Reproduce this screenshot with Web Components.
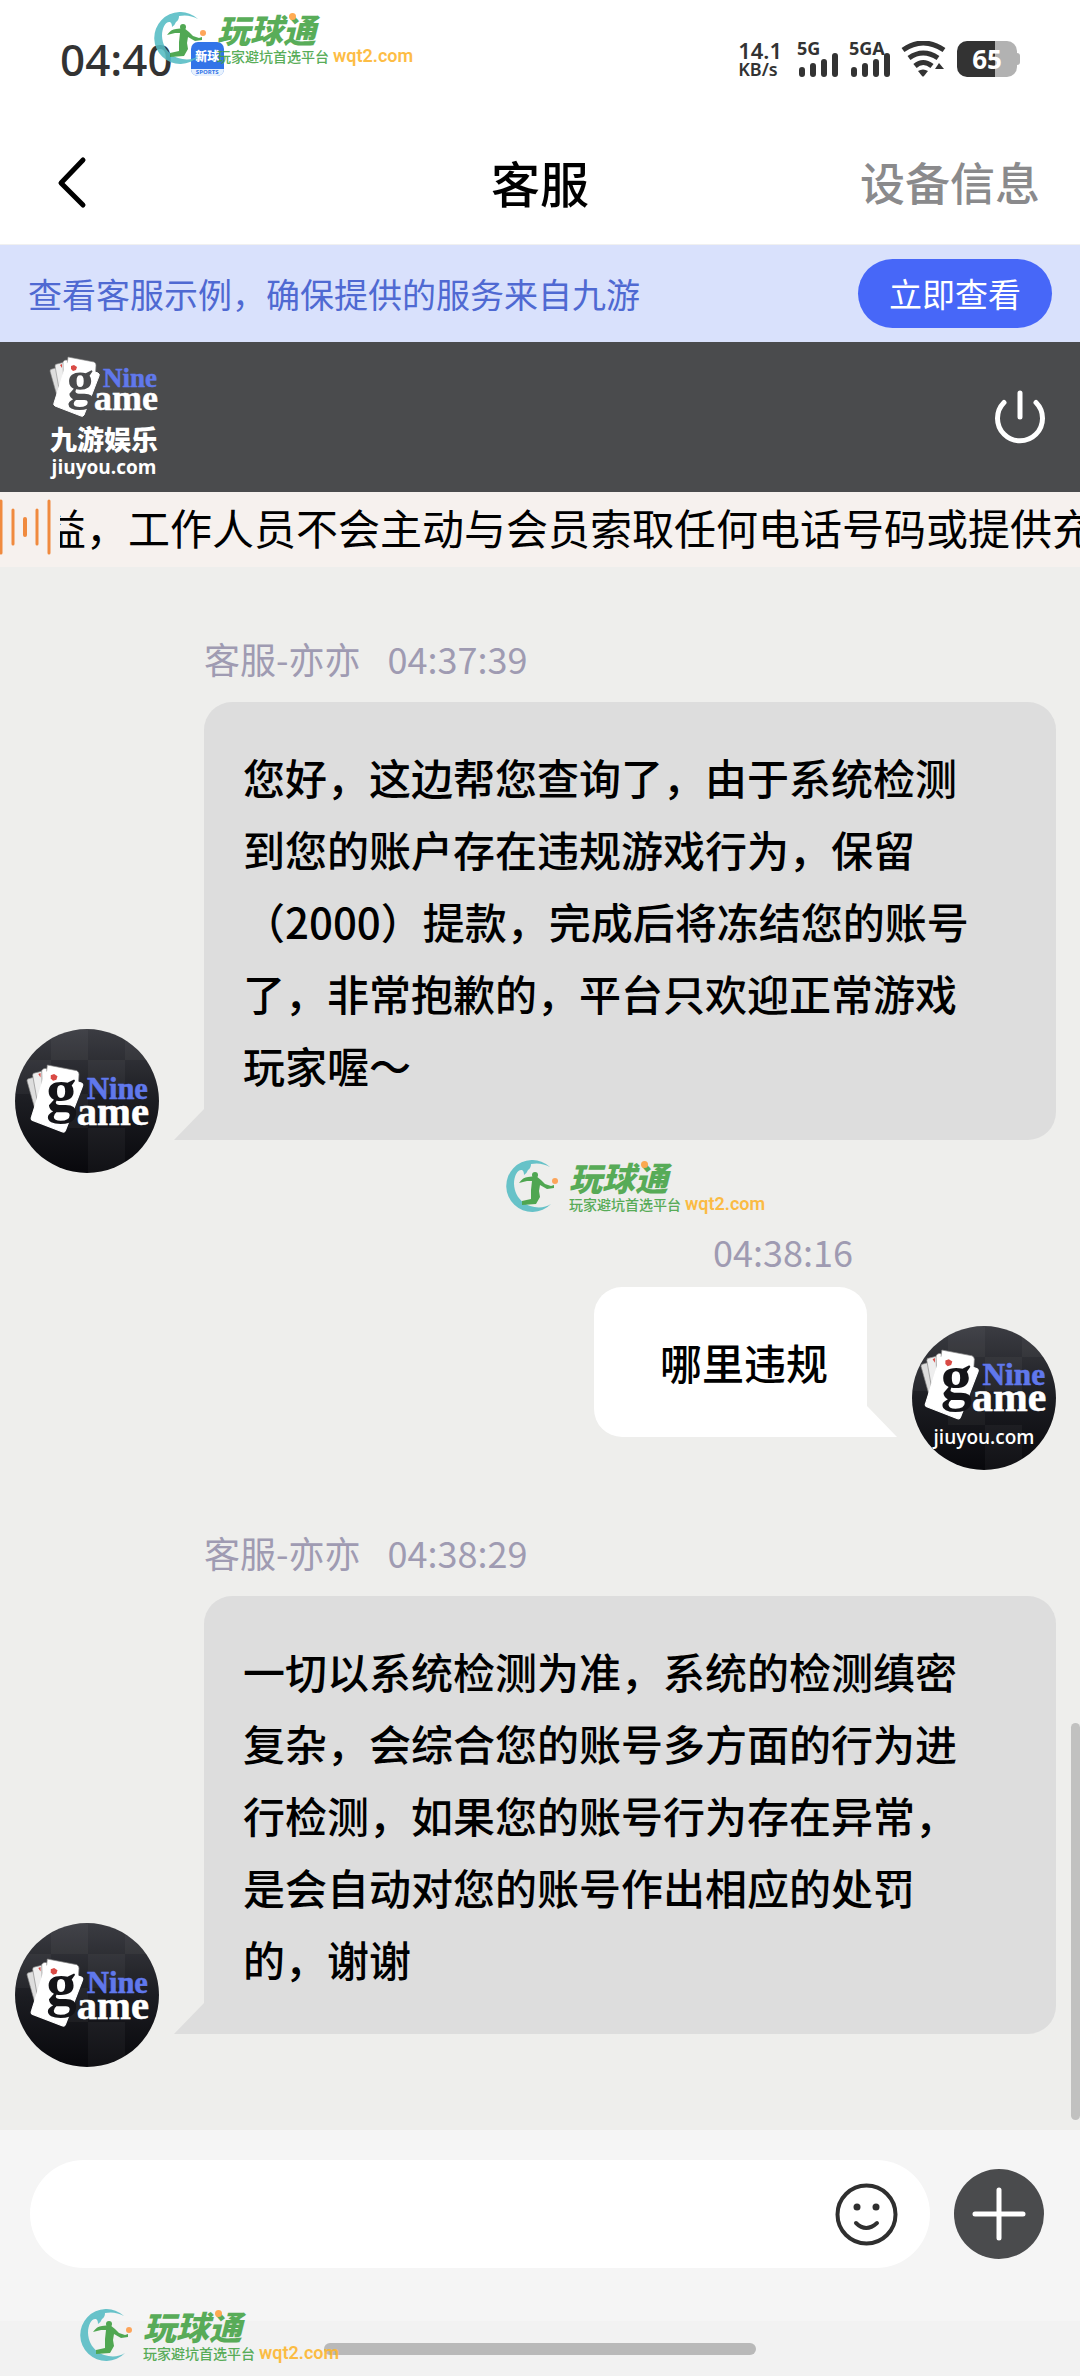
<!DOCTYPE html>
<html lang="zh-CN">
<head>
<meta charset="utf-8">
<meta name="viewport" content="width=device-width, initial-scale=1">
<title>客服</title>
<style>
    body {
        margin: 0;
        background: #eeeeec;
        color: #000;
        font-family: "Noto Sans CJK SC", sans-serif;
    }
</style>
</head>
<body>
<chat-app></chat-app>

<script>
class BaseComponent extends HTMLElement {
    constructor() {
        super();
        this._root = this.attachShadow({ mode: 'open' });
        this._root.innerHTML = `
        <style>
        * { box-sizing: border-box; }
        :host { display: block; box-sizing: border-box; }
        button {
            margin: 0;
            padding: 0;
            border: 0;
            background: none;
            color: inherit;
            font: inherit;
            cursor: pointer;
        }
        svg { display: block; }
        </style>
        ${this._template()}`;
    }
    _template() {
        return '';
    }
}

// cards + "Nine game", drawn in a 107 x 60 box; ink is the colour behind it
const nineGame = ink => `
    <g stroke="#888" stroke-width=".6">
        <path d="M0 14q0-2 2-2l7-2 4 34-4 2z" fill="#ddd"/>
        <path d="M5 9q0-2 2-2l8-2 5 24-9 14z" fill="#eee"/>
        <path d="M13 5q1-2 3-2l8 2-10 33z" fill="#fff"/>
        <path d="M18 0l26 5q2 1 2 3l-1 16-29-7z" fill="#fff"/>
    </g>
    <path d="M18 6l30 10q2 1 1 3L34 58q-1 2-3 1L5 49q-2-1-1-3L16 8q0-2 2-2z" fill="#fff" stroke="#fff"/>
    <path d="M21 9l3-1 3 2-1 3-3 1-2-2z" fill="#d94a45"/>
    <path d="M10 8l2-1v4z" fill="#d94a45"/>
    <text x="17" y="41" font-size="54" fill="${ink}">g</text>
    <text x="53" y="30" font-size="27" fill="#6078ec" stroke="#6078ec" stroke-width=".5">Nine</text>
    <text x="44" y="53" font-size="36" fill="#fff" stroke="#fff" stroke-width=".5">ame</text>`;

class BrandLogo extends BaseComponent {
    _template() {
        return `
        <style>
        :host { color: #fff; text-align: center; width: 108px; }
        svg { font: bold 27px "Liberation Serif", serif; overflow: visible; }
        .name { font-size: 27px; font-weight: 900; line-height: 36px; margin-top: 4px; }
        .site { font: 700 19px/20px "Open Sans", sans-serif; }
        </style>
        <svg width="107" height="60" viewBox="0 0 107 60">${nineGame('#4a4b4d')}</svg>
        <div class="name">九游娱乐</div>
        <div class="site">jiuyou.com</div>`;
    }
}
customElements.define('brand-logo', BrandLogo);

class UserAvatar extends BaseComponent {
    _template() {
        const site = this.hasAttribute('site');
        return `
        <style>
        :host { width: 144px; height: 144px; flex: none; }
        svg { border-radius: 50%; font-family: "Liberation Serif", serif; font-weight: bold; }
        .site { font: 600 19px "Open Sans", sans-serif; }
        </style>
        <svg width="144" height="144" viewBox="0 0 144 144">
            <defs>
                <linearGradient id="bg" x1="0" y1="0" x2="0" y2="1">
                    <stop offset="0" stop-color="#3b3c42"/>
                    <stop offset=".5" stop-color="#1c1d22"/>
                    <stop offset="1" stop-color="#08080c"/>
                </linearGradient>
            </defs>
            <rect width="144" height="144" fill="url(#bg)"/>
            <path d="M36 0h37v31H36zM73 31h37v34H73zM110 0h34v31h-34zM0 31h36v34H0zM36 65h37v34H36zM73 99h37v45H73z" fill="#fff" opacity=".04"/>
            <g transform="${site ? 'translate(9 24) scale(1.16)' : 'translate(12 36) scale(1.13)'}">${nineGame('#141418')}</g>
            ${site ? '<text class="site" x="72" y="118" fill="#fff" text-anchor="middle">jiuyou.com</text>' : ''}
        </svg>`;
    }
}
customElements.define('user-avatar', UserAvatar);

class SiteStamp extends BaseComponent {
    _template() {
        return `
        <style>
        :host {
            display: flex;
            gap: 10px;
            position: absolute;
            z-index: 2;
            white-space: nowrap;
            pointer-events: none;
            opacity: .88;
        }
        .title {
            position: relative;
            width: 104px;
            font-size: 33px;
            font-weight: 900;
            font-style: italic;
            line-height: 34px;
            color: #43a243;
        }
        .title::after {
            content: "";
            position: absolute;
            left: 72px;
            top: 1px;
            width: 7px;
            height: 7px;
            border-radius: 50%;
            background: #ffa03c;
        }
        .line { display: flex; gap: 4px; align-items: center; height: 20px; }
        .tag { font-size: 14px; line-height: 20px; color: #43a243; font-weight: 500; }
        .url { font: 600 18px/20px Roboto, sans-serif; color: #fdb52c; }
        </style>
        <svg width="56" height="53" viewBox="0 0 56 53">
            <path d="M47 7A26 26 0 1 0 48 44C36 52 12 46 11 24C11 15 15 9 19 10Q21 11 21 15Q24 13 25 10Q28 8 28 4Q38 2 47 7Z" fill="#55bcc4"/>
            <circle cx="32" cy="15" r="3" fill="#3a9d3c"/>
            <path d="M16 23q4-6 9-6l8-1 5 4 4 4 6 2 3-1v3l-7 1-7-4-1 6 1 6-4 7-14 1v-4l9-2v-9l1-9-5 0z" fill="#3a9d3c"/>
            <circle cx="52" cy="21" r="3" fill="#ff9a45"/>
        </svg>
        <div>
            <div class="title">玩球通</div>
            <div class="line"><span class="tag">玩家避坑首选平台</span><span class="url">wqt2.com</span></div>
        </div>`;
    }
}
customElements.define('site-stamp', SiteStamp);

class StatusBar extends BaseComponent {
    _template() {
        const bars = `<path d="M3 17v4M14 13v8M25 9v12M36 3v18" stroke="#333" stroke-width="6" stroke-linecap="round"/>`;
        return `
        <style>
        :host {
            display: flex;
            align-items: center;
            position: relative;
            height: 122px;
            padding: 0 60px 4px;
            background: #fff;
            color: #333;
        }
        site-stamp { left: 151px; top: 12px; }
        .time { font: 500 44px/50px "Noto Sans", sans-serif; }
        .app {
            width: 33px;
            height: 34px;
            margin-left: 18px;
            border-radius: 7px;
            overflow: hidden;
            background: #3274e8;
            color: #fff;
            text-align: center;
            font-size: 12px;
            font-weight: 900;
            line-height: 27px;
        }
        .app small {
            display: block;
            background: #e8f2fd;
            color: #3274e8;
            font: 700 6px/7px "Open Sans", sans-serif;
        }
        .icons { display: flex; align-items: center; margin-left: auto; font-family: "Noto Sans", sans-serif; }
        .speed { font-size: 18px; font-weight: 600; line-height: 18px; margin-right: 15px; }
        .speed b { display: block; font-size: 22px; font-weight: 600; line-height: 20px; }
        .net { font-size: 18px; font-weight: 700; line-height: 14px; width: 42px; margin-right: 10px; }
        .net svg { margin: -2px 0 0 2px; }
        .wifi { margin-right: 10px; }
        .battery {
            width: 60px;
            height: 36px;
            border-radius: 10px;
            background: linear-gradient(90deg, #333 63%, #b2b2b2 63%);
            color: #fff;
            font: 700 26px/36px "Noto Sans", sans-serif;
            text-align: center;
        }
        .tip { width: 3px; height: 12px; border-radius: 0 3px 3px 0; background: #b2b2b2; }
        </style>
        <span class="time">04:40</span>
        <div class="app">新球<small>SPORTS</small></div>
        <div class="icons">
            <div class="speed"><b>14.1</b>KB/s</div>
            <div class="net">5G<svg width="40" height="24" viewBox="0 0 40 24">${bars}</svg></div>
            <div class="net">5GA<svg width="40" height="24" viewBox="0 0 40 24">${bars}</svg></div>
            <svg class="wifi" width="46" height="36" viewBox="0 0 46 36" fill="none" stroke="#333" stroke-width="5">
                <path d="M2 9Q22-5 43 9M8 17Q22 7 37 17M14 25Q22 18 31 25"/>
                <path d="M17 30q5-3 10 0l-4 5q-1 1-2 0z" fill="#333" stroke="none"/>
                <path d="M34 28l4-6 5 6z" fill="#333" stroke="none"/>
            </svg>
            <div class="battery">65</div><div class="tip"></div>
        </div>
        <site-stamp></site-stamp>`;
    }
}
customElements.define('status-bar', StatusBar);

class NavBar extends BaseComponent {
    _template() {
        return `
        <style>
        :host {
            display: grid;
            grid-template-columns: 1fr auto 1fr;
            align-items: center;
            height: 123px;
            padding: 0 40px 2px;
            background: #fff;
            border-bottom: 1px solid #f0f0f0;
        }
        .back { justify-self: start; }
        h1 { margin: 0; font-size: 49px; font-weight: 500; line-height: 60px; }
        .info { justify-self: end; font-size: 45px; font-weight: 500; line-height: 60px; color: #8a8a8c; }
        </style>
        <button class="back" aria-label="返回">
            <svg width="60" height="60" viewBox="0 0 60 60"><path d="M43 8L21 31l22 22" fill="none" stroke="#000" stroke-width="5" stroke-linecap="round" stroke-linejoin="round"/></svg>
        </button>
        <h1><slot></slot></h1>
        <button class="info">设备信息</button>`;
    }
}
customElements.define('nav-bar', NavBar);

class TipBanner extends BaseComponent {
    _template() {
        return `
        <style>
        :host {
            display: flex;
            align-items: center;
            justify-content: space-between;
            height: 97px;
            padding: 0 28px;
            background: #d9e1fc;
            color: #4f69d2;
            font-size: 34px;
            line-height: 48px;
        }
        button {
            width: 194px;
            height: 69px;
            padding-bottom: 2px;
            border-radius: 35px;
            background: #4767f8;
            color: #fff;
            font-size: 33px;
        }
        </style>
        <slot></slot>
        <button>立即查看</button>`;
    }
}
customElements.define('tip-banner', TipBanner);

class BrandBar extends BaseComponent {
    _template() {
        return `
        <style>
        :host {
            display: flex;
            align-items: center;
            justify-content: space-between;
            height: 150px;
            padding: 0 32px 0 50px;
            background: #4a4b4d;
        }
        </style>
        <brand-logo></brand-logo>
        <button aria-label="结束会话">
            <svg width="56" height="56" viewBox="0 0 56 56" fill="none" stroke="#fff" stroke-width="5" stroke-linecap="round"><path d="M28 4v24M12 13.5a22.500 22.500 0 1 0 32 0"/></svg>
        </button>`;
    }
}
customElements.define('brand-bar', BrandBar);

class NoticeBar extends BaseComponent {
    _template() {
        return `
        <style>
        :host { display: flex; align-items: center; height: 75px; padding-bottom: 6px; background: #f6f1ee; overflow: hidden; }
        svg { flex: none; }
        .track { flex: 1; min-width: 0; margin-left: 8px; overflow: hidden; white-space: nowrap; font-size: 42px; line-height: 60px; }
        /* scrolled part of the marquee */
        .text { margin-left: -16px; }
        </style>
        <svg width="52" height="56" viewBox="0 0 52 56" stroke="#f08a3e" stroke-width="3" stroke-linecap="round">
            <path d="M1 2v52M13 11v34M37 11v34M49 2v52"/><path d="M25 20v16" stroke-width="4"/>
        </svg>
        <div class="track"><div class="text"><slot></slot></div></div>`;
    }
}
customElements.define('notice-bar', NoticeBar);

class ChatMessage extends BaseComponent {
    _template() {
        const mine = this.hasAttribute('mine');
        return `
        <style>
        :host { display: flex; gap: 45px; align-items: flex-end; padding: 0 24px 0 15px; }
        :host([mine]) { flex-direction: row-reverse; }
        .body { flex: 1; margin-bottom: 33px; }
        .meta {
            display: flex;
            gap: 27px;
            margin-bottom: 16px;
            font-size: 36px;
            line-height: 56px;
            color: #9f9bb2;
        }
        .bubble {
            position: relative;
            padding: 39px 80px 39px 39px;
            border-radius: 28px 28px 28px 0;
            background: #ddd;
            font-size: 42px;
            font-weight: 500;
            line-height: 72px;
        }
        .bubble::after {
            content: "";
            position: absolute;
            bottom: 0;
            right: 100%;
            width: 30px;
            height: 31px;
            background: inherit;
            clip-path: polygon(100% 0, 100% 100%, 0 100%);
        }
        :host([mine]) .body { display: flex; flex-direction: column; align-items: flex-end; }
        :host([mine]) .meta { margin-bottom: 12px; padding-right: 14px; line-height: 48px; }
        :host([mine]) .bubble { padding: 39px 39px 39px 66px; border-radius: 28px 28px 0 28px; background: #fff; }
        :host([mine]) .bubble::after { right: auto; left: 100%; clip-path: polygon(0 0, 100% 100%, 0 100%); }
        </style>
        <user-avatar ${mine ? 'site' : ''}></user-avatar>
        <div class="body">
            <div class="meta"><slot name="name"></slot><slot name="time"></slot></div>
            <div class="bubble"><slot></slot></div>
        </div>`;
    }
    connectedCallback() {
        if (!this.hasAttribute('mine')) return;
        const avatar = this._root.querySelector('user-avatar');
        if (!avatar.hasAttribute('site')) {
            const holder = document.createElement('template');
            holder.innerHTML = '<user-avatar site></user-avatar>';
            avatar.replaceWith(holder.content);
        }
    }
}

class ChatComposer extends BaseComponent {
    _template() {
        return `
        <style>
        :host {
            display: flex;
            align-items: center;
            gap: 24px;
            padding: 30px 36px 53px 30px;
            background: #f5f5f5;
        }
        .field {
            flex: 1;
            min-width: 0;
            display: flex;
            align-items: center;
            height: 108px;
            padding: 0 32px 0 40px;
            border-radius: 54px;
            background: #fff;
        }
        input {
            flex: 1;
            min-width: 0;
            border: 0;
            outline: 0;
            background: none;
            font: inherit;
            font-size: 42px;
        }
        .plus { border-radius: 50%; background: #4a4b4d; }
        </style>
        <div class="field">
            <input type="text" aria-label="消息">
            <button aria-label="表情">
                <svg width="63" height="63" viewBox="0 0 63 63" fill="none" stroke="#2f2f2f" stroke-width="4" stroke-linecap="round">
                    <circle cx="31.500" cy="31.500" r="29"/>
                    <path d="M21 40q10 10 21 0"/>
                    <g fill="#2f2f2f" stroke="none"><circle cx="22" cy="24" r="3.500"/><circle cx="41" cy="24" r="3.500"/></g>
                </svg>
            </button>
        </div>
        <button class="plus" aria-label="更多">
            <svg width="90" height="90" viewBox="0 0 90 90"><path d="M45 21v48M21 45h48" stroke="#fff" stroke-width="5" stroke-linecap="round"/></svg>
        </button>`;
    }
}
customElements.define('chat-composer', ChatComposer);

class ChatApp extends BaseComponent {
    _template() {
        return `
        <style>
        :host { display: flex; flex-direction: column; min-height: 100vh; }
        main {
            position: relative;
            flex: 1;
            display: flex;
            flex-direction: column;
            gap: 54px;
            padding: 63px 0 48px;
            background: #eeeeec;
        }
        main site-stamp { left: 503px; top: 593px; }
        .scroll {
            position: absolute;
            right: 0;
            bottom: 10px;
            width: 9px;
            height: 397px;
            border-radius: 5px;
            background: #c1c1c0;
        }
        footer {
            position: relative;
            display: flex;
            justify-content: center;
            align-items: center;
            height: 55px;
            background: #f2f2f2;
        }
        footer site-stamp { left: 77px; top: -12px; }
        .home { width: 40%; height: 12px; border-radius: 6px; background: #b9b9b9; }
        </style>
        <status-bar></status-bar>
        <nav-bar>客服</nav-bar>
        <tip-banner>查看客服示例，确保提供的服务来自九游</tip-banner>
        <brand-bar></brand-bar>
        <notice-bar>益，工作人员不会主动与会员索取任何电话号码或提供充</notice-bar>
        <main>
            <chat-message>
                <span slot="name">客服-亦亦</span><span slot="time">04:37:39</span>您好，这边帮您查询了，由于系统检测到您的账户存在违规游戏行为，保留（2000）提款，完成后将冻结您的账号了，非常抱歉的，平台只欢迎正常游戏玩家喔～</chat-message>
            <chat-message mine><span slot="time">04:38:16</span>哪里违规</chat-message>
            <chat-message>
                <span slot="name">客服-亦亦</span><span slot="time">04:38:29</span>一切以系统检测为准，系统的检测缜密复杂，会综合您的账号多方面的行为进行检测，如果您的账号行为存在异常，是会自动对您的账号作出相应的处罚的，谢谢</chat-message>
            <site-stamp></site-stamp>
            <div class="scroll"></div>
        </main>
        <chat-composer></chat-composer>
        <footer>
            <div class="home"></div>
            <site-stamp></site-stamp>
        </footer>`;
    }
}
customElements.define('chat-message', ChatMessage);
customElements.define('chat-app', ChatApp);
</script>
</body>
</html>
